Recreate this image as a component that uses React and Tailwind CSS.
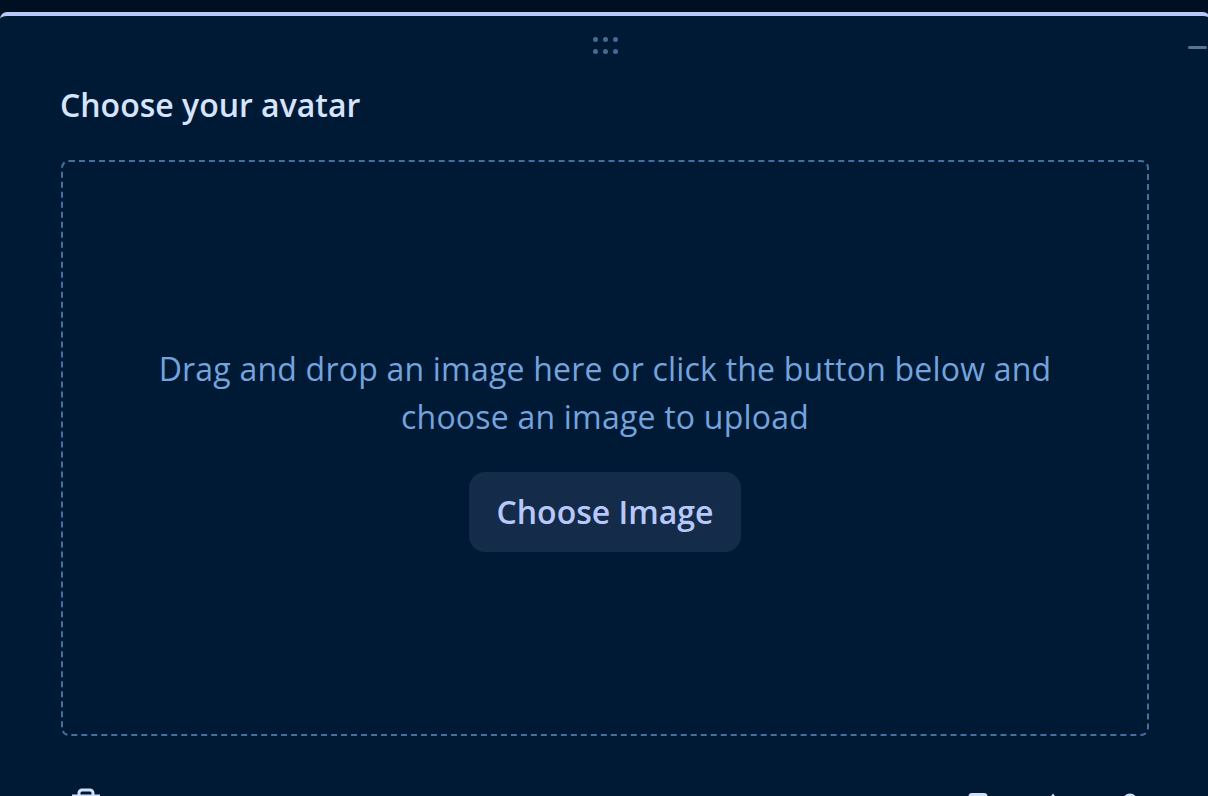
import React from "react";

function Grip() {
  return (
    <div className="grid grid-cols-3 gap-[5px]">
      {[0, 1, 2, 3, 4, 5].map((i) => (
        <span key={i} className="w-[5px] h-[5px] rounded-full bg-[#456a94]" />
      ))}
    </div>
  );
}

export default function App() {
  return (
    <div className="h-[796px] w-[1208px] overflow-hidden flex flex-col bg-gradient-to-b from-[#000f21] to-[#00142a] font-['Open_Sans','Noto_Sans',sans-serif]">
      <div className="h-[12px] shrink-0" />
      <div className="relative flex-1 flex flex-col w-[1210px] bg-[#001a35] border-t-4 border-[#b8c8fa] rounded-t-[7px] px-[61px] min-h-0">
        <div className="flex justify-center pt-[21px] h-[40px] shrink-0">
          <Grip />
        </div>
        <div className="absolute left-[1188px] top-[30px] w-[19px] h-[3px] rounded-sm bg-[#5a7390]" />
        <h2 className="text-[32px] leading-[40px] font-semibold text-[#d6e4fd] mt-[29px] shrink-0 -translate-x-[1px]">
          Choose your avatar
        </h2>
        <div className="mt-[35px] w-[1088px] h-[576px] shrink-0 rounded-lg border-2 border-dashed border-[#44709f] flex flex-col items-center justify-center">
          <p className="text-[32px] leading-[48px] tracking-[0.21px] text-[#74a3de] text-center w-[920px]">
            Drag and drop an image here or click the button below and choose an image to upload
          </p>
          <button className="mt-[31px] w-[272px] h-[80px] rounded-[16px] bg-[#142c49] text-[32px] font-semibold text-[#b8c8fa]">
            Choose Image
          </button>
        </div>
        <div className="mt-[52px] h-[20px] shrink-0 flex w-[1088px] text-[#cfe0fb]">
          <svg width="32" height="32" viewBox="0 0 32 32" className="ml-[9px] shrink-0" fill="none" stroke="currentColor" strokeWidth="3">
            <path d="M9 8V5a3 3 0 0 1 3-3h8a3 3 0 0 1 3 3v3M2 8h28" />
          </svg>
          <svg width="24" height="24" viewBox="0 0 24 24" className="ml-[864px] mt-[5px] shrink-0" fill="none" stroke="currentColor" strokeWidth="3">
            <rect x="4" y="1.5" width="16" height="20" rx="2" />
          </svg>
          <svg width="24" height="24" viewBox="0 0 24 24" className="ml-[51px] mt-[5px] shrink-0" fill="currentColor">
            <path d="M12 0.5l3 4h-6z" />
          </svg>
          <svg width="24" height="24" viewBox="0 0 24 24" className="ml-[53px] mt-[5px] shrink-0" fill="none" stroke="currentColor" strokeWidth="3">
            <circle cx="12" cy="8" r="6" />
          </svg>
        </div>
      </div>
    </div>
  );
}
